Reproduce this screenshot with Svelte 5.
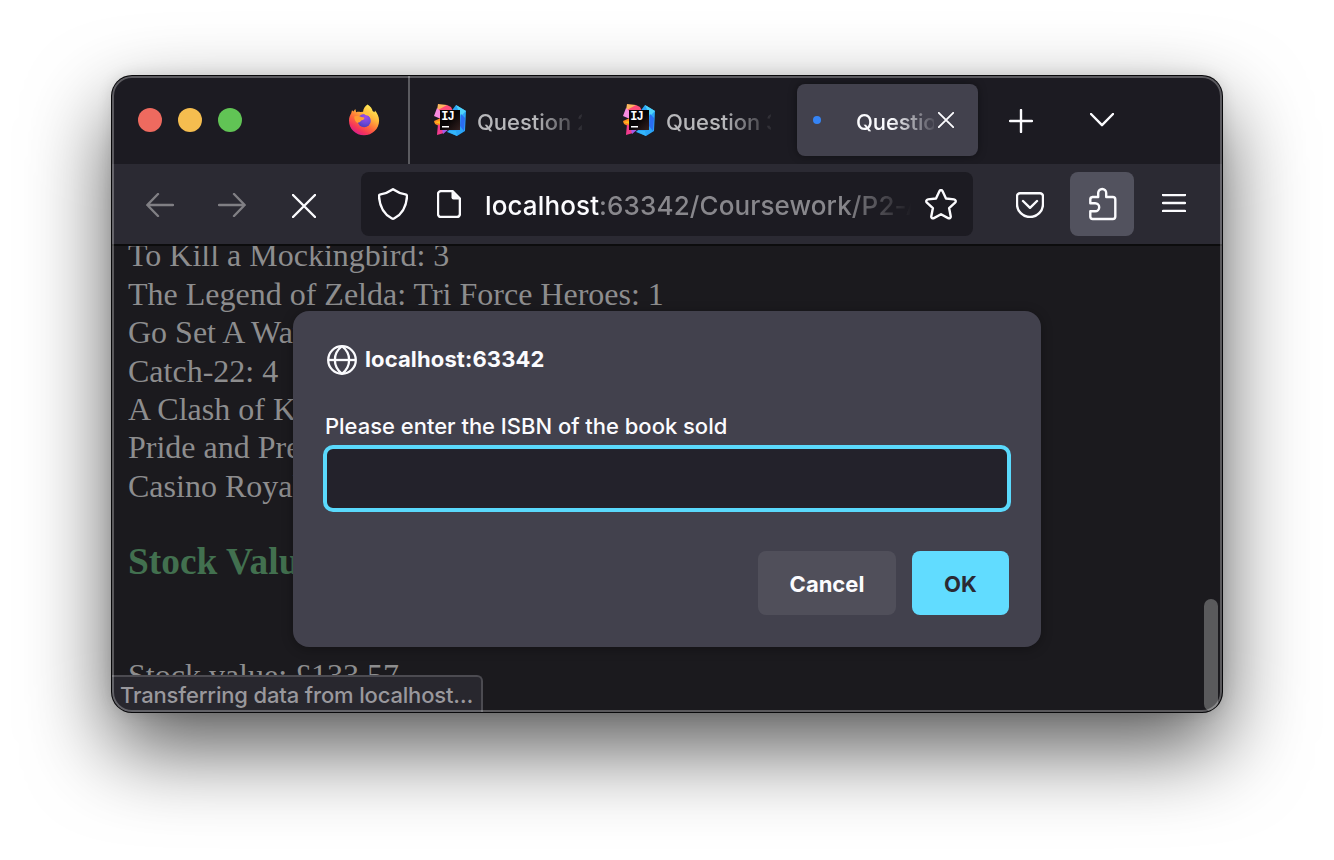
<script>
  const stock = [
    'To Kill a Mockingbird: 3',
    'The Legend of Zelda: Tri Force Heroes: 1',
    'Go Set A Watchman',
    'Catch-22: 4',
    'A Clash of Kings',
    'Pride and Prejudice',
    'Casino Royale'
  ];
  const idleTabs = ['Question 2', 'Question 3'];
</script>

<main class="desktop">
  <div class="window">
    <header class="tabbar">
      <div class="lights">
        <i class="red"></i><i class="amber"></i><i class="green"></i>
      </div>
      <div class="pinned">
        <svg width="32" height="32" viewBox="0 0 32 32">
          <defs>
            <linearGradient id="fox" x1="0.8" y1="0.05" x2="0.25" y2="0.95">
              <stop offset="0" stop-color="#fff15a" />
              <stop offset="0.35" stop-color="#ffb53a" />
              <stop offset="0.62" stop-color="#ff6a3a" />
              <stop offset="0.85" stop-color="#f5335c" />
              <stop offset="1" stop-color="#d9208a" />
            </linearGradient>
            <radialGradient id="orb" cx="0.6" cy="0.2" r="0.85">
              <stop offset="0" stop-color="#a34bea" />
              <stop offset="0.6" stop-color="#6a48d6" />
              <stop offset="1" stop-color="#4a3bb4" />
            </radialGradient>
          </defs>
          <path fill="url(#fox)" d="M19.6.4c2.9 1.8 4.6 4.3 5 6.6l1.9 1.2.5-1.6c2.4 2.7 4.1 6.300 4.100 10.100C31 25 24.300 31.200 16 31.200S1 25 1 16.700c0-3.200.8-5.300 2.200-7.500L4 6.200l1.400 1.300L7.300 5l.9 3.200c1.300-.6 2.900-.6 4.200-.2l2.700-.2C15.200 4.600 17.200 1.800 19.600.4z" />
          <circle cx="16.200" cy="16.700" r="6.600" fill="url(#orb)" />
          <path fill="#ff9d33" d="M6.300 12.500c2.300-1 5.300-.4 6.800.5 1.800.2 3.400.3 3.300 1.300-.2 1.400-1.900 1.800-3.300 2.300-.7 1.700-2.300 2-3.600 2.300-2-.8-3.500-3.500-3.200-6.400z" />
          <path fill="#ffc43b" d="M15.100 8.100c3.900-.4 7.700 2.700 8.200 6.800-1.600-2.700-3.300-3.400-5.200-3.600-1.400-.5-2.500-1.700-3-3.200z" />
        </svg>
      </div>
      <span class="divider"></span>
      {#each idleTabs as title}
        <div class="tab">
          <svg width="32" height="32" viewBox="0 0 32 32">
            <defs>
              <linearGradient id="chip" x1="0" y1="0" x2="1" y2="1">
                <stop offset="0.5" stop-color="#080506" />
                <stop offset="1" stop-color="#33201f" />
              </linearGradient>
            </defs>
            <path fill="#fdb65f" d="M4 0l9 1-2 8-9 3z" />
            <path fill="#ff4d78" d="M13 1l4 2 3 6H6L4 6z" />
            <path fill="#f78be0" d="M3 4l4 4v7l-7-3z" />
            <path fill="#ff8a1f" d="M0 17l7-3v9l-6-3z" />
            <path fill="#ffc21f" d="M0 18l7-1v3z" />
            <path fill="#f33c8e" d="M4 20l7 6-1 3-7 2z" />
            <path fill="#a45be8" d="M8 25h7l-6 5z" />
            <path fill="#2aa5f7" d="M16 9l6-8 10 6-1 20-8 5-10-4 4-4z" />
            <path fill="#4fd3fb" d="M22 1l10 6-5 5z" />
            <path fill="#2b6df0" d="M27 10l4 4-1 13-4-5z" />
            <path fill="#33b6fa" d="M13 27h9l1 5z" />
            <rect x="6" y="6" width="20" height="20" fill="url(#chip)" />
            <text x="7.200" y="16" class="ij">IJ</text>
            <path fill="#fff" d="M8 22h7v1.600H8z" />
          </svg>
          <span class="title">{title}</span>
        </div>
      {/each}
      <div class="tab active">
        <i class="loading"></i>
        <span class="title">Question 4</span>
        <svg class="close" width="16" height="16" viewBox="0 0 16 16"><path d="M.8.8l14.400 14.400M15.200.8L.8 15.200" /></svg>
      </div>
      <svg class="plus" width="24" height="24" viewBox="0 0 24 24"><path d="M12 1v22M1 12h22" /></svg>
      <svg class="chevron" width="24" height="14" viewBox="0 0 24 14"><path d="M1 1l11 11.200L23 1" /></svg>
    </header>

    <nav class="toolbar">
      <svg class="dim" width="28" height="24" viewBox="0 0 28 24"><path d="M27 12H1.500M12 1L1.300 12 12 23" /></svg>
      <svg class="dim fwd" width="28" height="24" viewBox="0 0 28 24"><path d="M1 12h25.500M16 1l10.700 11L16 23" /></svg>
      <svg class="stop" width="24" height="24" viewBox="0 0 24 24"><path d="M1 1l22 22M23 1L1 23" /></svg>
      <div class="url">
        <svg width="30" height="32" viewBox="0 0 30 32"><path d="M15 1.200c3.800 2.600 8 4.500 12.400 5.200 1.200.2 1.700 1 1.600 2.100-.6 9.500-5 17.700-12.600 21.800-.9.500-1.900.5-2.800 0C6 26.200 1.600 18 1 8.500.9 7.400 1.400 6.600 2.600 6.400 7 5.700 11.200 3.800 15 1.200z" /></svg>
        <svg class="doc" width="24" height="28" viewBox="0 0 24 28"><path d="M4 1.100h11.500l7.400 7.400V24a3 3 0 0 1-3 3H4a3 3 0 0 1-3-3V4.100a3 3 0 0 1 3-3z" /><path class="solid" d="M14.500 1v6.500a2 2 0 0 0 2 2H23z" /></svg>
        <span class="address"><b>localhost</b>:63342/Coursework/P2-A</span>
        <svg class="star" width="32" height="31" viewBox="0 0 32 31"><path d="M14.400 2.200c.7-1.500 2.500-1.500 3.200 0l3.400 7.300 8 .9c1.700.2 2.300 2 1.100 3.200l-6 5.500 1.600 8.100c.3 1.700-1.100 2.700-2.600 1.900L16 25.200l-7.100 3.900c-1.500.8-2.900-.2-2.600-1.900l1.600-8.100-6-5.500C.700 12.400 1.300 10.600 3 10.400l8-.9z" /></svg>
      </div>
      <svg class="pocket" width="28" height="26" viewBox="0 0 28 26"><path d="M4 1.200h20a3 3 0 0 1 3 3V12a13 13 0 0 1-26 0V4.200a3 3 0 0 1 3-3zM7 9l7 6.800L21 9" /></svg>
      <div class="ext">
        <svg width="28" height="34" viewBox="0 0 28 34"><path d="M3.500 10H9.200V6a4 4 0 0 1 8 0v4h6.600a2.500 2.500 0 0 1 2.500 2.500v17a2.500 2.500 0 0 1-2.500 2.500H3.800a2.500 2.500 0 0 1-2.500-2.500v-5.300h4.900a4 4 0 0 0 0-8H1.300v-3.700A2.500 2.500 0 0 1 3.500 10z" /></svg>
      </div>
      <svg class="menu" width="24" height="18" viewBox="0 0 24 18"><path d="M1 1h22M1 9h22M1 17h22" /></svg>
    </nav>

    <section class="page">
      <div class="lines">
        {#each stock as line}<p>{line}</p>{/each}
      </div>
      <h3>Stock Value</h3>
      <p class="total">Stock value: £133.57</p>
      <span class="scroll"></span>
    </section>

    <div class="dialog">
      <div class="origin">
        <svg width="30" height="30" viewBox="0 0 30 30"><circle cx="15" cy="15" r="13.800" /><path d="M15 1.200C5.500 8.500 5.500 21.500 15 28.800M15 1.200c9.500 7.300 9.500 20.300 0 27.600" /><path d="M1 15h28" /></svg>
        <strong>localhost:63342</strong>
      </div>
      <label for="isbn">Please enter the ISBN of the book sold</label>
      <input id="isbn" type="text" />
      <div class="buttons">
        <button>Cancel</button>
        <button class="ok">OK</button>
      </div>
    </div>

    <div class="status">Transferring data from localhost…</div>
    <span class="edge"></span>
  </div>
</main>

<style>
  :global(body) { margin: 0; background: #fff; overflow: hidden; }
  .desktop {
    width: 1334px; height: 860px; box-sizing: border-box; padding: 76px 112px; overflow: hidden;
    font-family: Inter, "Liberation Sans", sans-serif; font-weight: 500;
  }
  svg { flex: none; display: block; }
  .window {
    position: relative; width: 1110px; height: 636px; border-radius: 20px; overflow: hidden;
    background: #1b1a1e; display: flex; flex-direction: column;
    box-shadow: 0 0 0 1px #08080a, 0 36px 84px rgba(0, 0, 0, .66), 0 0 16px rgba(0, 0, 0, .12);
  }
  .edge { position: absolute; inset: 0; border: 2px solid rgba(255, 255, 255, .28); border-radius: 20px; pointer-events: none; box-sizing: border-box; }

  .tabbar { height: 88px; flex: none; display: flex; align-items: center; background: #1c1b22; }
  .lights { display: flex; gap: 16px; margin-left: 26px; }
  .lights i { width: 24px; height: 24px; border-radius: 50%; }
  .red { background: #ee6a5f; }
  .amber { background: #f5bd4f; }
  .green { background: #61c455; }
  .pinned { margin: 0 28px 0 106px; }
  .divider { width: 2px; height: 88px; background: #5b5b60; margin-right: 24px; }
  .tab { width: 148px; margin-right: 41px; display: flex; align-items: center; gap: 11px; color: #b8b8bb; font-size: 22px; flex: none; box-sizing: border-box; }
  .ij { font: bold 12px "Liberation Mono", monospace; fill: #fff; letter-spacing: -.8px; }
  .title {
    flex: 1; min-width: 0; overflow: hidden; white-space: nowrap; line-height: 32px; padding-top: 4px; letter-spacing: -.05px;
    mask-image: linear-gradient(to right, #000 55%, transparent 105%);
  }
  .tab.active {
    width: 181px; height: 72px; margin: 0 31px 0 -15px; padding: 0 24px 0 16px; gap: 0; border-radius: 8px;
    background: #42414d; color: #fbfbfe; box-shadow: 0 0 8px rgba(0, 0, 0, .4);
  }
  .active .title { mask-image: linear-gradient(to right, #000 45%, transparent 105%); letter-spacing: -.1px; }
  .loading { width: 8px; height: 8px; border-radius: 50%; background: #3584f5; margin-right: 35px; }
  .close { margin-left: 4px; }
  .close path { stroke: #fbfbfe; stroke-width: 1.9; stroke-linecap: round; }
  .plus { margin-top: 2px; }
  .chevron { margin-left: 57px; }
  .plus path, .chevron path, .toolbar path {
    fill: none; stroke: #fbfbfe; stroke-width: 2.4; stroke-linecap: round; stroke-linejoin: round;
  }

  .toolbar { height: 80px; flex: none; display: flex; align-items: center; background: #2b2a33; border-bottom: 2px solid #0c0c0d; padding-left: 34px; }
  .toolbar .dim path { stroke: #807f84; }
  .toolbar .dim { margin-top: 2px; }
  .fwd { margin-left: 44px; }
  .stop { margin: 4px 45px 0 46px; }
  .url { width: 612px; height: 64px; border-radius: 8px; background: #1c1b22; display: flex; align-items: center; padding: 0 16px 0 17px; box-sizing: border-box; }
  .doc { margin-left: 29px; }
  .toolbar path.solid { fill: #fbfbfe; stroke: none; }
  .address {
    flex: 1; min-width: 0; margin: 4px 13px 0 24px; white-space: nowrap; overflow: hidden; font-size: 26px; line-height: 36px; color: #88878c;
    letter-spacing: .12px;
    mask-image: linear-gradient(to right, #000 84%, transparent 100%);
  }
  .address b { color: #fbfbfe; font-weight: 500; }
  .pocket { margin: 1px 26px 0 43px; }
  .ext { width: 64px; height: 64px; border-radius: 8px; background: #52525e; display: flex; align-items: center; justify-content: center; padding-left: 2px; box-sizing: border-box; }
  .menu { margin: 0 0 2px 28px; }

  .page { flex: 1; min-height: 0; overflow: hidden; position: relative; padding-left: 16px; font: 32px/38.4px "Liberation Serif", serif; color: #8d8d8e; }
  .page p { margin: 0; white-space: nowrap; }
  .lines { margin-top: -9.700px; }
  h3 { margin: 35.200px 0 37px; font-size: 37.4px; line-height: 44px; color: #42704f; }
  .total { padding-top: 35px; }
  .scroll { position: absolute; right: 4px; top: 353px; width: 14px; height: 112px; border-radius: 7px; background: #5a5a5c; }

  .dialog {
    position: absolute; left: 181px; top: 235px; width: 748px; height: 336px; border-radius: 16px; background: #42414d;
    box-sizing: border-box; padding: 32px; display: flex; flex-direction: column; color: #fbfbfe; font-size: 22px;
    box-shadow: 0 2px 12px rgba(0, 0, 0, .3);
  }
  .origin { display: flex; align-items: center; gap: 8px; height: 34px; padding-left: 2px; }
  .origin svg * { fill: none; stroke: #fbfbfe; stroke-width: 2.3; }
  .origin strong { font-weight: 700; line-height: 30px; margin-bottom: 2px; letter-spacing: .12px; }
  label { margin-top: 34px; line-height: 30px; white-space: nowrap; letter-spacing: -.02px; }
  input { width: 688px; height: 67px; margin: 4px 0 0 -2px; box-sizing: border-box; border: 4px solid #5ad9fc; border-radius: 10px; background: #23222b; outline: 0; }
  .buttons { display: flex; justify-content: flex-end; gap: 16px; margin-top: 39px; }
  button { width: 138px; height: 64px; border: 0; border-radius: 8px; background: #504f5a; color: #fbfbfe; font: 700 22px Inter, sans-serif; padding: 2px 0 0; }
  .ok { width: 97px; background: #61dcff; color: #2b2a33; }

  .status {
    position: absolute; left: 0; bottom: 0; width: 371px; height: 37px; box-sizing: border-box; padding-left: 8px;
    border: solid #4c4b51; border-width: 2px 2px 0 0; border-top-right-radius: 6px; background: #28272e;
    color: #99989d; font-size: 22px; line-height: 36px; white-space: nowrap; letter-spacing: -.16px;
  }
</style>
